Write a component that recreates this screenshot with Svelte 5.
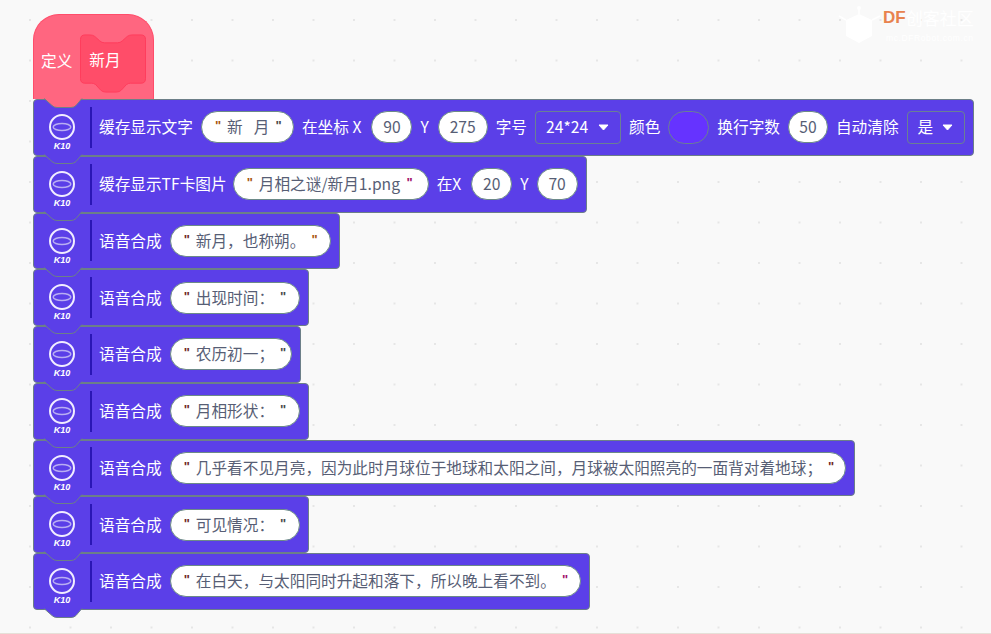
<script>
  const speech = [
    { text: '新月，也称朔。', w: 161, q: '#a8560f' },
    { text: '出现时间：', w: 130, q: '#4a4a4a' },
    { text: '农历初一；', w: 122, q: '#4a4a4a' },
    { text: '月相形状：', w: 130, q: '#4a4a4a' },
    { text: '几乎看不见月亮，因为此时月球位于地球和太阳之间，月球被太阳照亮的一面背对着地球；', w: 676, q: '#702828' },
    { text: '可见情况：', w: 130, q: '#4a4a4a' },
    { text: '在白天，与太阳同时升起和落下，所以晚上看不到。', w: 411, q: '#a0106a' }
  ];
</script>

{#snippet k10()}
  <div class="k10">
    <svg width="28" height="28" viewBox="0 0 28 28" aria-hidden="true">
      <circle cx="14" cy="14" r="12" fill="none" stroke="#f1edff" stroke-width="2" />
      <ellipse cx="14" cy="14" rx="8.800" ry="3.600" fill="none" stroke="#b9aef2" stroke-width="1.500" />
    </svg>
    <span>K10</span>
  </div>
  <i class="sep"></i>
{/snippet}

{#snippet bump(color, stroke)}
  <svg class="bump" width="39" height="10" viewBox="0 0 39 10" aria-hidden="true">
    <path d="M0 0 L8 7.500 Q10 9.500 13 9.500 H27 Q30 9.500 32 7.500 L38 0 Z" fill={color} />
    <path d="M0 .5 L8 7.500 Q10 9.500 13 9.500 H27 Q30 9.500 32 7.500 L38 .5" fill="none" stroke={stroke} />
  </svg>
{/snippet}

{#snippet pill(text, width, q1 = '#a8560f', q2 = '#4a4a4a')}
  <span class="pill" style="width:{width}px"><b style="color:{q1}">"</b><em>{text}</em><b class="end" style="color:{q2}">"</b></span>
{/snippet}

{#snippet num(text, width)}
  <span class="pill num" style="width:{width}px">{text}</span>
{/snippet}

{#snippet drop(text, width)}
  <span class="drop" style="width:{width}px">{text}<svg width="11" height="7" viewBox="0 0 11 7" aria-hidden="true"><path d="M1 1 H10 L5.500 6 Z" fill="#fff" stroke="#fff" stroke-linejoin="round" /></svg></span>
{/snippet}

<main class="stage">
  <div class="watermark">
    <svg width="44" height="40" viewBox="0 0 44 40" aria-hidden="true">
      <path d="M21 9 L34 15 V31 L21 38 L8 31 V15 Z" fill="#fff" />
      <path d="M21 9 V3 M8 15 L1 11 M34 15 L42 11" stroke="#fff" stroke-width="1.500" />
      <circle cx="21" cy="3" r="2" fill="#fff" />
    </svg>
    <div class="wm-text">
      <div class="wm-top"><strong>DF</strong><span>创客社区</span></div>
      <div class="wm-sub">mc.DFRobot.com.cn</div>
    </div>
  </div>

  <div class="stack">
    <div class="hat">
      <span>定义</span>
      <div class="proto">
        <svg width="66" height="59" viewBox="0 0 67 59" aria-hidden="true">
          <path d="M5 .5 H10 Q13 .5 15 2 L20 6.500 Q22 8.500 25 8.500 H38 Q41 8.500 43 6.500 L48 2 Q50 .5 53 .5 H62 Q66.500 .5 66.500 5 V45 Q66.500 49.500 62 49.500 H51 Q49 49.500 47 51 L42 56.500 Q40 58.500 37 58.500 H26 Q23 58.500 21 56.500 L16 51 Q14 49.500 12 49.500 H5 Q.5 49.500 .5 45 V5 Q.5 .5 5 .5 Z" fill="#ff4d69" stroke="#ff3d5c" />
        </svg>
        <span>新月</span>
      </div>
      {@render bump('#ff6680', '#6c7f88')}
    </div>

    <div class="block">
      {@render k10()}
      <span>缓存显示文字</span>
      {@render pill('新  月', 93)}
      <span class="wide">在坐标 X</span>
      {@render num('90', 41)}
      <span class="letter">Y</span>
      {@render num('275', 50)}
      <span>字号</span>
      {@render drop('24*24', 86)}
      <span>颜色</span>
      <span class="swatch"></span>
      <span>换行字数</span>
      {@render num('50', 40)}
      <span>自动清除</span>
      {@render drop('是', 58)}
      {@render bump('#5b3fe8', '#6c7f88')}
    </div>

    <div class="block">
      {@render k10()}
      <span class="narrow">缓存显示TF卡图片</span>
      {@render pill('月相之谜/新月1.png', 196, '#a8560f', '#a0106a')}
      <span class="wide">在X</span>
      {@render num('20', 41)}
      <span>Y</span>
      {@render num('70', 41)}
      {@render bump('#5b3fe8', '#6c7f88')}
    </div>

    {#each speech as s}
      <div class="block">
        {@render k10()}
        <span>语音合成</span>
        {@render pill(s.text, s.w, '#702828', s.q)}
        {@render bump('#5b3fe8', '#6c7f88')}
      </div>
    {/each}
  </div>
</main>

<style>
  :global(body) {
    margin: 0;
    background: #f9f9f9;
  }
  .stage {
    position: relative;
    box-sizing: border-box;
    height: 634px;
    padding: 14px 0 0 33px;
    overflow: hidden;
    font-family: "Noto Sans CJK SC", "Liberation Sans", sans-serif;
    font-size: 15.67px;
    color: #fff;
    background-color: #f9f9f9;
    background-image: radial-gradient(circle at 1px 1px, #e6e6e6 1px, transparent 1.3px);
    background-size: 40.5px 40.5px;
    background-position: 29px 19px;
    border-bottom: 1px solid #e6e0d8;
  }
  .stack {
    display: flex;
    flex-direction: column;
    align-items: flex-start;
  }
  .hat {
    position: relative;
    z-index: 20;
    box-sizing: border-box;
    display: flex;
    align-items: center;
    gap: 8px;
    width: 121px;
    height: 85px;
    padding: 13px 0 0 7px;
    background: #ff6680;
    border: 1px solid #ff4d6a;
    border-bottom: 0;
    border-radius: 26px 26px 0 0;
  }
  .proto {
    position: relative;
    width: 66px;
    height: 59px;
    display: flex;
    align-items: center;
    padding-left: 9px;
    box-sizing: border-box;
  }
  .proto svg {
    position: absolute;
    left: 0;
    top: 0;
  }
  .proto span {
    position: relative;
    margin-top: -8px;
  }
  .hat > span {
    margin-top: -6px;
  }
  .block {
    position: relative;
    box-sizing: border-box;
    display: flex;
    align-items: center;
    gap: 8px;
    height: 56.75px;
    padding: 0 8px 0 0;
    background: #5b3fe8;
    border: 1px solid #6c7f88;
    border-radius: 4px;
    white-space: nowrap;
    line-height: 20px;
  }
  .block:nth-child(2) { z-index: 19; }
  .block:nth-child(3) { z-index: 18; }
  .block:nth-child(4) { z-index: 17; }
  .block:nth-child(5) { z-index: 16; }
  .block:nth-child(6) { z-index: 15; }
  .block:nth-child(7) { z-index: 14; }
  .block:nth-child(8) { z-index: 13; }
  .block:nth-child(9) { z-index: 12; }
  .block:nth-child(10) { z-index: 11; }
  .bump {
    position: absolute;
    left: 10px;
    bottom: -9px;
  }
  .k10 {
    flex: none;
    align-self: flex-start;
    width: 56px;
    margin-right: -8px;
    padding-top: 13px;
    display: flex;
    flex-direction: column;
    align-items: center;
    box-sizing: border-box;
  }
  .k10 span {
    margin-top: 0;
    font: italic 700 9px/10px "Liberation Sans", sans-serif;
    color: #fff;
  }
  .sep {
    flex: none;
    width: 2px;
    height: 41px;
    margin-right: -1px;
    background: #2a16b5;
  }
  .wide {
    margin-right: 2px;
  }
  .narrow {
    margin-right: -2px;
  }
  .letter {
    margin-right: 1px;
  }
  .pill,
  .drop,
  .swatch {
    flex: none;
    box-sizing: border-box;
    display: inline-flex;
    align-items: center;
  }
  .pill {
    height: 32px;
    padding: 0 15px 0 13px;
    gap: 6px;
    background: #fff;
    border: 1px solid #6c8a88;
    border-radius: 16px;
    color: #575e75;
  }
  .pill b {
    font: 700 13px/1 "Liberation Sans", sans-serif;
    margin-top: -3px;
  }
  .pill .end {
    margin-left: auto;
  }
  .pill em {
    font-style: normal;
    white-space: pre;
    word-spacing: 2px;
  }
  .num {
    justify-content: center;
    padding: 0;
  }
  .drop {
    height: 33px;
    padding: 0 11px 0 10px;
    justify-content: space-between;
    border: 1px solid #6a7f94;
    border-radius: 4px;
  }
  .swatch {
    width: 41px;
    height: 33px;
    background: #6633ff;
    border: 1px solid #6a7f94;
    border-radius: 17px;
  }
  .watermark {
    position: absolute;
    left: 838px;
    top: 5px;
    display: flex;
    gap: 1px;
  }
  .wm-text {
    margin-top: 2px;
  }
  .wm-top {
    display: flex;
    align-items: center;
    font-size: 17px;
    line-height: 22px;
    color: #fff;
  }
  .wm-top strong {
    color: #e8834e;
    font: 700 17px/22px "Liberation Sans", sans-serif;
  }
  .wm-sub {
    margin-top: 3px;
    margin-left: 3px;
    font: 8.5px/12px "Liberation Sans", sans-serif;
    letter-spacing: .6px;
    color: #fff;
  }
</style>
